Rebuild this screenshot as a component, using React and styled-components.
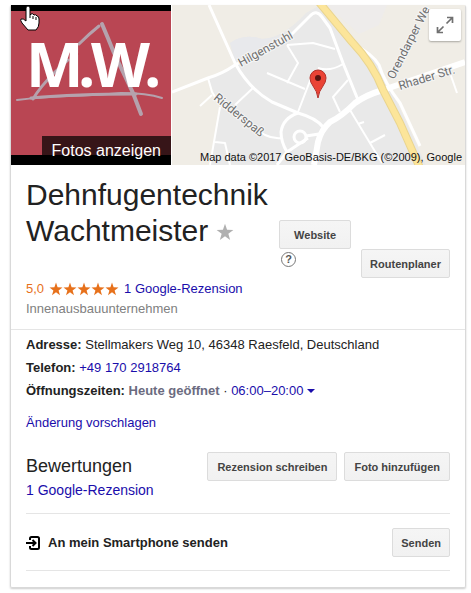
import React from 'react';
import styled, { createGlobalStyle } from 'styled-components';

const STAR = 'M7 .5L8.600 5.300L13.500 5.400L9.600 8.400L11 13.200L7 10.300L3 13.200L4.400 8.400L.5 5.400L5.400 5.300z';

function App() {
  return (
    <>
      <GlobalStyle />
      <Card>
        <Media>
          <Photo href="#fotos">
            <PhotoArt />
            <PhotoLabel>Fotos anzeigen</PhotoLabel>
          </Photo>
          <MapBox>
            <MapArt />
            <Attribution>Map data ©2017 GeoBasis-DE/BKG (©2009), Google</Attribution>
            <Expand type="button" aria-label="Karte maximieren">
              <svg width="18" height="18" viewBox="0 0 18 18" fill="none" stroke="#707070" strokeWidth="1.7">
                <path d="M10.500 7.500L16 2M11 1.500h5.500V7M7.500 10.500L2 16M1.500 11v5.500H7" />
              </svg>
            </Expand>
          </MapBox>
        </Media>

        <Header>
          <TitleRow>
            <Title>
              Dehnfugentechnik Wachtmeister
              <Favorite type="button" aria-label="Speichern">
                <svg width="18" height="18" viewBox="0 0 14 14">
                  <path d={STAR} fill="#b0b0b0" />
                </svg>
              </Favorite>
            </Title>
            <WebsiteGroup>
              <Button type="button">Website</Button>
              <Help type="button" aria-label="Hilfe">?</Help>
            </WebsiteGroup>
            <Button type="button">Routenplaner</Button>
          </TitleRow>
          <Rating>
            <Score>5,0</Score>
            <Stars role="img" aria-label="5 von 5 Sternen">
              {[0, 1, 2, 3, 4].map((i) => (
                <svg key={i} width="14" height="14" viewBox="0 0 14 14">
                  <path d={STAR} fill="#e7711b" />
                </svg>
              ))}
            </Stars>
            <Link href="#rezensionen">1 Google-Rezension</Link>
          </Rating>
          <Category>Innenausbauunternehmen</Category>
        </Header>

        <Details>
          <Fact>
            <b>Adresse:</b> Stellmakers Weg 10, 46348 Raesfeld, Deutschland
          </Fact>
          <Fact>
            <b>Telefon:</b> <Link href="tel:+491702918764">+49 170 2918764</Link>
          </Fact>
          <Fact>
            <b>Öffnungszeiten:</b> <Open>Heute geöffnet</Open> ·{' '}
            <Hours type="button">
              06:00–20:00
              <svg width="8" height="4" viewBox="0 0 8 4">
                <path d="M0 0h8L4 4z" fill="#1a0dab" />
              </svg>
            </Hours>
          </Fact>
          <Suggest>
            <Link href="#vorschlag">Änderung vorschlagen</Link>
          </Suggest>

          <Reviews>
            <div>
              <Heading>Bewertungen</Heading>
              <ReviewLink href="#rezensionen">1 Google-Rezension</ReviewLink>
            </div>
            <Actions>
              <Button type="button">Rezension schreiben</Button>
              <Button type="button">Foto hinzufügen</Button>
            </Actions>
          </Reviews>

          <SendRow>
            <svg width="14" height="14" viewBox="0 0 14 14" fill="none" stroke="#000" strokeWidth="2">
              <path d="M4 4V2.500Q4 1 5.500 1h6Q13 1 13 2.500v9q0 1.500-1.500 1.500h-6Q4 13 4 11.500V10" />
              <path d="M0 7h9M6.500 4L9.500 7l-3 3" />
            </svg>
            <SendLabel>An mein Smartphone senden</SendLabel>
            <Button type="button">Senden</Button>
          </SendRow>
        </Details>
      </Card>
    </>
  );
}

function PhotoArt() {
  return (
    <Art viewBox="0 0 160 160" aria-hidden="true">
      <rect width="160" height="160" fill="#000" />
      <rect y="6" width="160" height="144" fill="#b94653" />
      <g fill="none" stroke="#b5a2ad" strokeLinecap="round">
        <path d="M22 94Q29 82 44 67L57 55M68 39Q78 29 88 21" strokeWidth="3" />
        <path d="M91 19Q97 33 103 48L122 88L130 109" strokeWidth="4" />
        <path d="M6 95Q30 92 58 91T110 88Q136 88 151 93" strokeWidth="2" />
        <path d="M20 93Q65 89 125 89" strokeWidth="3" />
      </g>
      <LogoText x="15 67 80 133" y="82">M.W.</LogoText>
      <path
        d="M15 3q0-2 2-2t2 2v7l1-1q2-1 3 1 2-1 3 1 2 0 2 3v4q0 4-3 7h-8l-6-7q-2-3-1-4 2-1 5 2z"
        fill="#fff"
        stroke="#000"
      />
      <path d="M19 10v3M22 11v3M25 12v3" stroke="#000" />
    </Art>
  );
}

function MapArt() {
  return (
    <Art viewBox="0 0 293 160" preserveAspectRatio="xMidYMid slice" aria-hidden="true">
      <rect width="293" height="160" fill="#f0ede6" />
      <path
        d="M36 73L63 60L58 38Q72 28 90 34Q111 33 134 8L148 0L180 38L205 55L254 160H38L48 102z"
        fill="#e9e9e9"
      />
      <path d="M58 38Q72 28 90 34L114 31L65 59z" fill="#e8e9ec" />
      <path d="M155 0h60l-8 20-20 9z" fill="#eeeceb" />
      <g fill="none" stroke="#fff" strokeWidth="2" strokeLinejoin="round">
        <path d="M37 0L63 58Q77 84 100 97L126 108Q144 113 151 122" strokeWidth="3" />
        <path d="M0 87L36 73Q50 69 63 60L118 31L138 11Q144 4 150 12L158 23L171 58L186 95" strokeWidth="3" />
        <path d="M115 40L126 58L115 78M95 68L133 84M115 40L141 38L163 44M146 63Q158 67 171 59" />
        <path d="M141 68L126 107M36 73L40 87L48 100L93 130Q101 134 110 133M40 90L28 101" />
        <path d="M48 102L38 160M81 83L63 100M43 137L53 138L58 160" />
        <path d="M126 108Q111 113 109 127Q109 137 115 147L136 133M115 147L105 160" strokeWidth="3" />
        <circle cx="128" cy="132" r="6" strokeWidth="3" />
        <path d="M134 131L147 129" strokeWidth="3" />
        <path d="M176 75L161 92L168 107M178 105L210 158M186 119L192 117M198 138L213 130M278 68L285 88" />
        <path d="M181 39Q201 49 207 60Q212 77 228 98L248 141" strokeWidth="3" />
        <path d="M142 160L146 137Q149 125 158 117Q169 112 183 98Q194 90 211 85L293 57" strokeWidth="6" />
      </g>
      <path d="M146-4L180 37Q201 59 211 85L228 118L248 163" fill="none" stroke="#ead58f" strokeWidth="8" />
      <path d="M146-4L180 37Q201 59 211 85L228 118L248 163" fill="none" stroke="#fce59a" strokeWidth="6" />
      <StreetName transform="translate(69 62) rotate(-29)">Hilgenstuhl</StreetName>
      <StreetName transform="translate(41 94) rotate(39)">Ridderspaß</StreetName>
      <StreetName transform="translate(222 75) rotate(-63)">Orendarper We</StreetName>
      <StreetName transform="translate(228 85) rotate(-17)">Rhader Str.</StreetName>
      <path
        d="M146 93Q145 86 141 81Q138 77 138 73A8 8 0 0 1 154 73Q154 77 151 81Q147 86 146 93z"
        fill="#ea4335"
        stroke="#b3312a"
      />
      <circle cx="146" cy="73" r="3" fill="#5a1410" />
    </Art>
  );
}

const GlobalStyle = createGlobalStyle`
  * {
    box-sizing: border-box;
  }
  body {
    margin: 0;
    background: #fff;
    color: #222;
    font-family: 'Liberation Sans', Arial, sans-serif;
    font-size: 13px;
  }
`;

const Card = styled.main`
  margin: 5px 5px 5px 10px;
  border: 1px solid #d9d9d9;
  border-top: 0;
  border-radius: 2px;
  box-shadow: 0 1px 2px rgba(0, 0, 0, 0.2);
`;

const Media = styled.div`
  display: flex;
  gap: 1px;
  height: 160px;
`;

const Art = styled.svg`
  display: block;
  width: 100%;
  height: 100%;
`;

const Photo = styled.a`
  position: relative;
  flex: 0 0 160px;
`;

const PhotoLabel = styled.span`
  position: absolute;
  right: 0;
  bottom: 0;
  padding: 0 10px;
  background: rgba(0, 0, 0, 0.7);
  color: #fff;
  font-size: 16px;
  line-height: 29px;
`;

const LogoText = styled.text`
  font-family: 'Open Sans', sans-serif;
  font-size: 61px;
  font-weight: 700;
  fill: #fff;
`;

const MapBox = styled.div`
  position: relative;
  flex: 1;
  min-width: 0;
`;

const StreetName = styled.text`
  font-family: Roboto, sans-serif;
  font-size: 12px;
  fill: #707070;
  stroke: #f5f5f5;
  stroke-width: 2px;
  paint-order: stroke;
`;

const Attribution = styled.small`
  position: absolute;
  right: 0;
  bottom: 0;
  padding: 0 3px;
  color: #111;
  font-size: 11px;
  line-height: 16px;
  white-space: nowrap;
`;

const Expand = styled.button`
  position: absolute;
  top: 4px;
  right: 4px;
  display: flex;
  align-items: center;
  justify-content: center;
  width: 32px;
  height: 32px;
  padding: 0;
  border: 0;
  border-radius: 2px;
  background: #fff;
  box-shadow: 0 1px 2px rgba(0, 0, 0, 0.3);
  cursor: pointer;
`;

const Header = styled.header`
  padding: 12px 15px 10px;
  border-bottom: 1px solid #e5e5e5;
`;

const TitleRow = styled.div`
  display: flex;
  align-items: flex-end;
  gap: 10px;
`;

const Title = styled.h1`
  flex: 1;
  align-self: flex-start;
  min-width: 0;
  margin: 0;
  font-size: 30px;
  font-weight: 400;
  line-height: 36px;
`;

const Favorite = styled.button`
  margin-left: 8px;
  padding: 0;
  border: 0;
  background: none;
  line-height: 18px;
  cursor: pointer;
`;

const Button = styled.button`
  height: 29px;
  padding: 0 8px;
  border: 1px solid #dcdcdc;
  border-radius: 2px;
  background: linear-gradient(#f5f5f5, #f1f1f1);
  color: #444;
  font-family: inherit;
  font-size: 11px;
  font-weight: 700;
  white-space: nowrap;
  cursor: pointer;
  &:hover {
    border-color: #c6c6c6;
    color: #222;
  }
`;

const WebsiteGroup = styled.div`
  display: flex;
  flex-direction: column;
  align-items: flex-start;
  gap: 3px;
  margin: 43px 0 11px;
  ${Button} {
    width: 72px;
  }
`;

const Help = styled.button`
  width: 15px;
  height: 15px;
  margin-left: 2px;
  padding: 0;
  border: 1px solid #777;
  border-radius: 50%;
  background: #fff;
  color: #555;
  font-family: inherit;
  font-size: 11px;
  font-weight: 700;
  line-height: 13px;
  cursor: pointer;
`;

const Rating = styled.div`
  display: flex;
  align-items: center;
  gap: 5px;
  margin-top: 1px;
  line-height: 20px;
`;

const Score = styled.span`
  color: #e7711b;
`;

const Stars = styled.span`
  display: flex;
`;

const Link = styled.a`
  color: #1a0dab;
  text-decoration: none;
  &:hover {
    text-decoration: underline;
  }
`;

const Category = styled.div`
  color: #808080;
  line-height: 20px;
`;

const Details = styled.section`
  padding: 3px 15px 16px;
`;

const Fact = styled.div`
  line-height: 23px;
`;

const Open = styled.b`
  color: #6b6b80;
`;

const Hours = styled.button`
  display: inline-flex;
  align-items: center;
  gap: 4px;
  padding: 0;
  border: 0;
  background: none;
  color: #1a0dab;
  font: inherit;
  cursor: pointer;
`;

const Suggest = styled.div`
  margin-top: 9px;
  line-height: 23px;
`;

const Reviews = styled.div`
  display: flex;
  justify-content: space-between;
  margin-top: 18px;
  padding-bottom: 13px;
  border-bottom: 1px solid #e5e5e5;
`;

const Heading = styled.h2`
  margin: 0;
  font-size: 18px;
  font-weight: 400;
  line-height: 28px;
`;

const ReviewLink = styled(Link)`
  display: block;
  font-size: 14px;
  line-height: 20px;
`;

const Actions = styled.div`
  display: flex;
  gap: 7px;
  ${Button} {
    padding: 0 9px;
  }
`;

const SendRow = styled.div`
  display: flex;
  align-items: center;
  gap: 8px;
  padding: 14px 0 13px;
  border-bottom: 1px solid #e5e5e5;
`;

const SendLabel = styled.span`
  flex: 1;
  font-size: 13px;
  font-weight: 700;
`;

export default App;
